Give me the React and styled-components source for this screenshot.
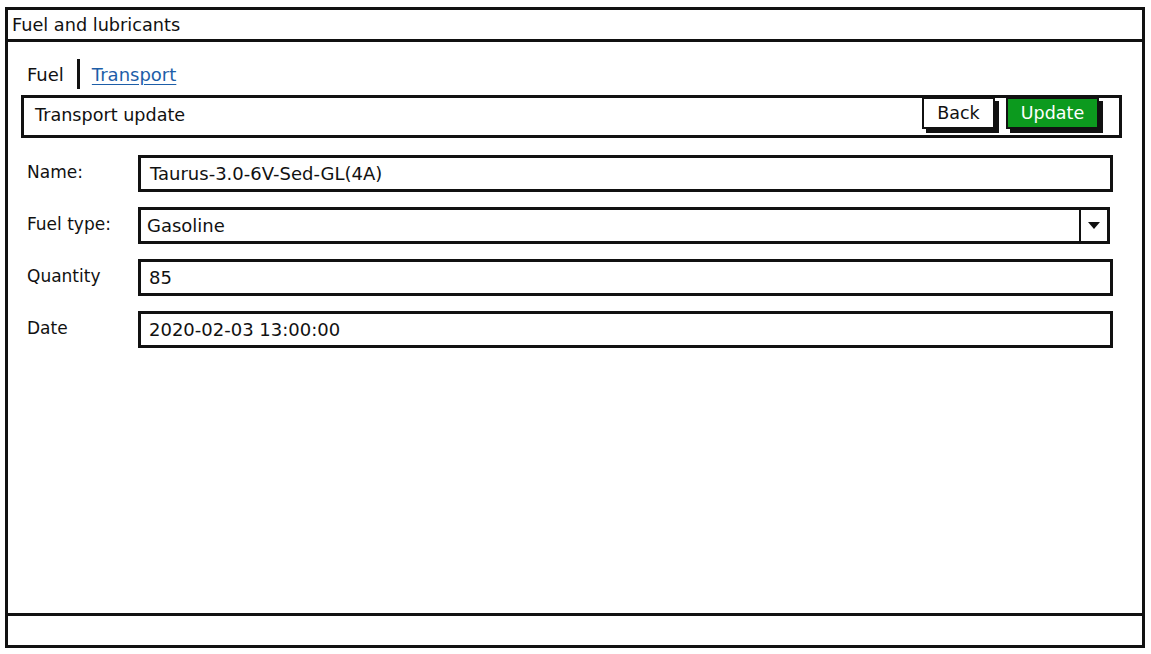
import React from "react"
import styled, { createGlobalStyle } from "styled-components"

const ink = "#111"

const GlobalStyle = createGlobalStyle`
  html, body {
    margin: 0;
    padding: 0;
    background: #fff;
  }
  body {
    font-family: "DejaVu Sans", "Liberation Sans", sans-serif;
    color: ${ink};
  }
`

const Window = styled.div`
  box-sizing: border-box;
  margin: 7px 0 0 5px;
  width: 1140px;
  height: 641px;
  border: 3px solid ${ink};
  display: flex;
  flex-direction: column;
  background: #fff;
`

const TitleBar = styled.div`
  height: 29px;
  border-bottom: 3px solid ${ink};
  display: flex;
  align-items: center;
  padding-left: 4px;
  font-size: 17.7px;
`

const Body = styled.div`
  flex: 1;
  padding: 16px 0 0 13px;
`

const Tabs = styled.div`
  display: flex;
  align-items: center;
  height: 32px;
  padding-left: 6px;
  font-size: 18px;
`

const Tab = styled.span`
  color: ${ink};
`

const TabDivider = styled.span`
  width: 3px;
  height: 30px;
  background: ${ink};
  margin: 0 12px 0 13px;
`

const TabLink = styled.a`
  color: #1d5ea8;
  text-decoration: underline;
  text-underline-offset: 3px;
  cursor: pointer;
`

const Toolbar = styled.div`
  box-sizing: border-box;
  margin-top: 5px;
  width: 1101px;
  height: 43px;
  border: 3px solid ${ink};
  display: flex;
  align-items: flex-start;
  padding: 0 20px 0 11px;
`

const ToolbarTitle = styled.div`
  flex: 1;
  align-self: center;
  margin-top: -3px;
  font-size: 17.6px;
`

const Button = styled.button`
  box-sizing: border-box;
  height: 32px;
  width: ${(p) => p.$width}px;
  margin-left: ${(p) => p.$gap || 0}px;
  margin-top: -1px;
  border: 2px solid ${ink};
  box-shadow: 4px 4px 0 ${ink};
  background: ${(p) => (p.$primary ? "#0c9a1e" : "#fff")};
  color: ${(p) => (p.$primary ? "#fff" : ink)};
  font-family: inherit;
  font-size: 17.5px;
  padding: 0;
  cursor: pointer;
`

const Form = styled.div`
  margin-top: 17px;
  padding-left: 6px;
  display: flex;
  flex-direction: column;
  gap: 15px;
`

const Row = styled.div`
  display: flex;
  align-items: center;
`

const Label = styled.label`
  width: 111px;
  font-size: 17px;
  margin-top: -3px;
`

const Field = styled.div`
  box-sizing: border-box;
  width: ${(p) => p.$width || 975}px;
  height: 37px;
  border: 3px solid ${ink};
  display: flex;
  align-items: center;
  padding-left: ${(p) => p.$indent || 9}px;
  font-size: 18px;
`

const SelectValue = styled.span`
  flex: 1;
`

const SelectArrow = styled.span`
  align-self: stretch;
  width: 26px;
  border-left: 2px solid ${ink};
  display: flex;
  align-items: center;
  justify-content: center;
`

const StatusBar = styled.div`
  height: 29px;
  border-top: 3px solid ${ink};
`

export default function App() {
  return (
    <>
      <GlobalStyle />
      <Window>
        <TitleBar>Fuel and lubricants</TitleBar>
        <Body>
          <Tabs>
            <Tab>Fuel</Tab>
            <TabDivider />
            <TabLink>Transport</TabLink>
          </Tabs>
          <Toolbar>
            <ToolbarTitle>Transport update</ToolbarTitle>
            <Button $width={73}>Back</Button>
            <Button $width={93} $gap={11} $primary>
              Update
            </Button>
          </Toolbar>
          <Form>
            <Row>
              <Label>Name:</Label>
              <Field>Taurus-3.0-6V-Sed-GL(4A)</Field>
            </Row>
            <Row>
              <Label>Fuel type:</Label>
              <Field $width={972} $indent={6}>
                <SelectValue>Gasoline</SelectValue>
                <SelectArrow>
                  <svg width="12" height="8" viewBox="0 0 12 8">
                    <path d="M0 0 L12 0 L6 7 Z" fill={ink} />
                  </svg>
                </SelectArrow>
              </Field>
            </Row>
            <Row>
              <Label>Quantity</Label>
              <Field $indent={8}>85</Field>
            </Row>
            <Row>
              <Label>Date</Label>
              <Field $indent={8}>2020-02-03 13:00:00</Field>
            </Row>
          </Form>
        </Body>
        <StatusBar />
      </Window>
    </>
  )
}
